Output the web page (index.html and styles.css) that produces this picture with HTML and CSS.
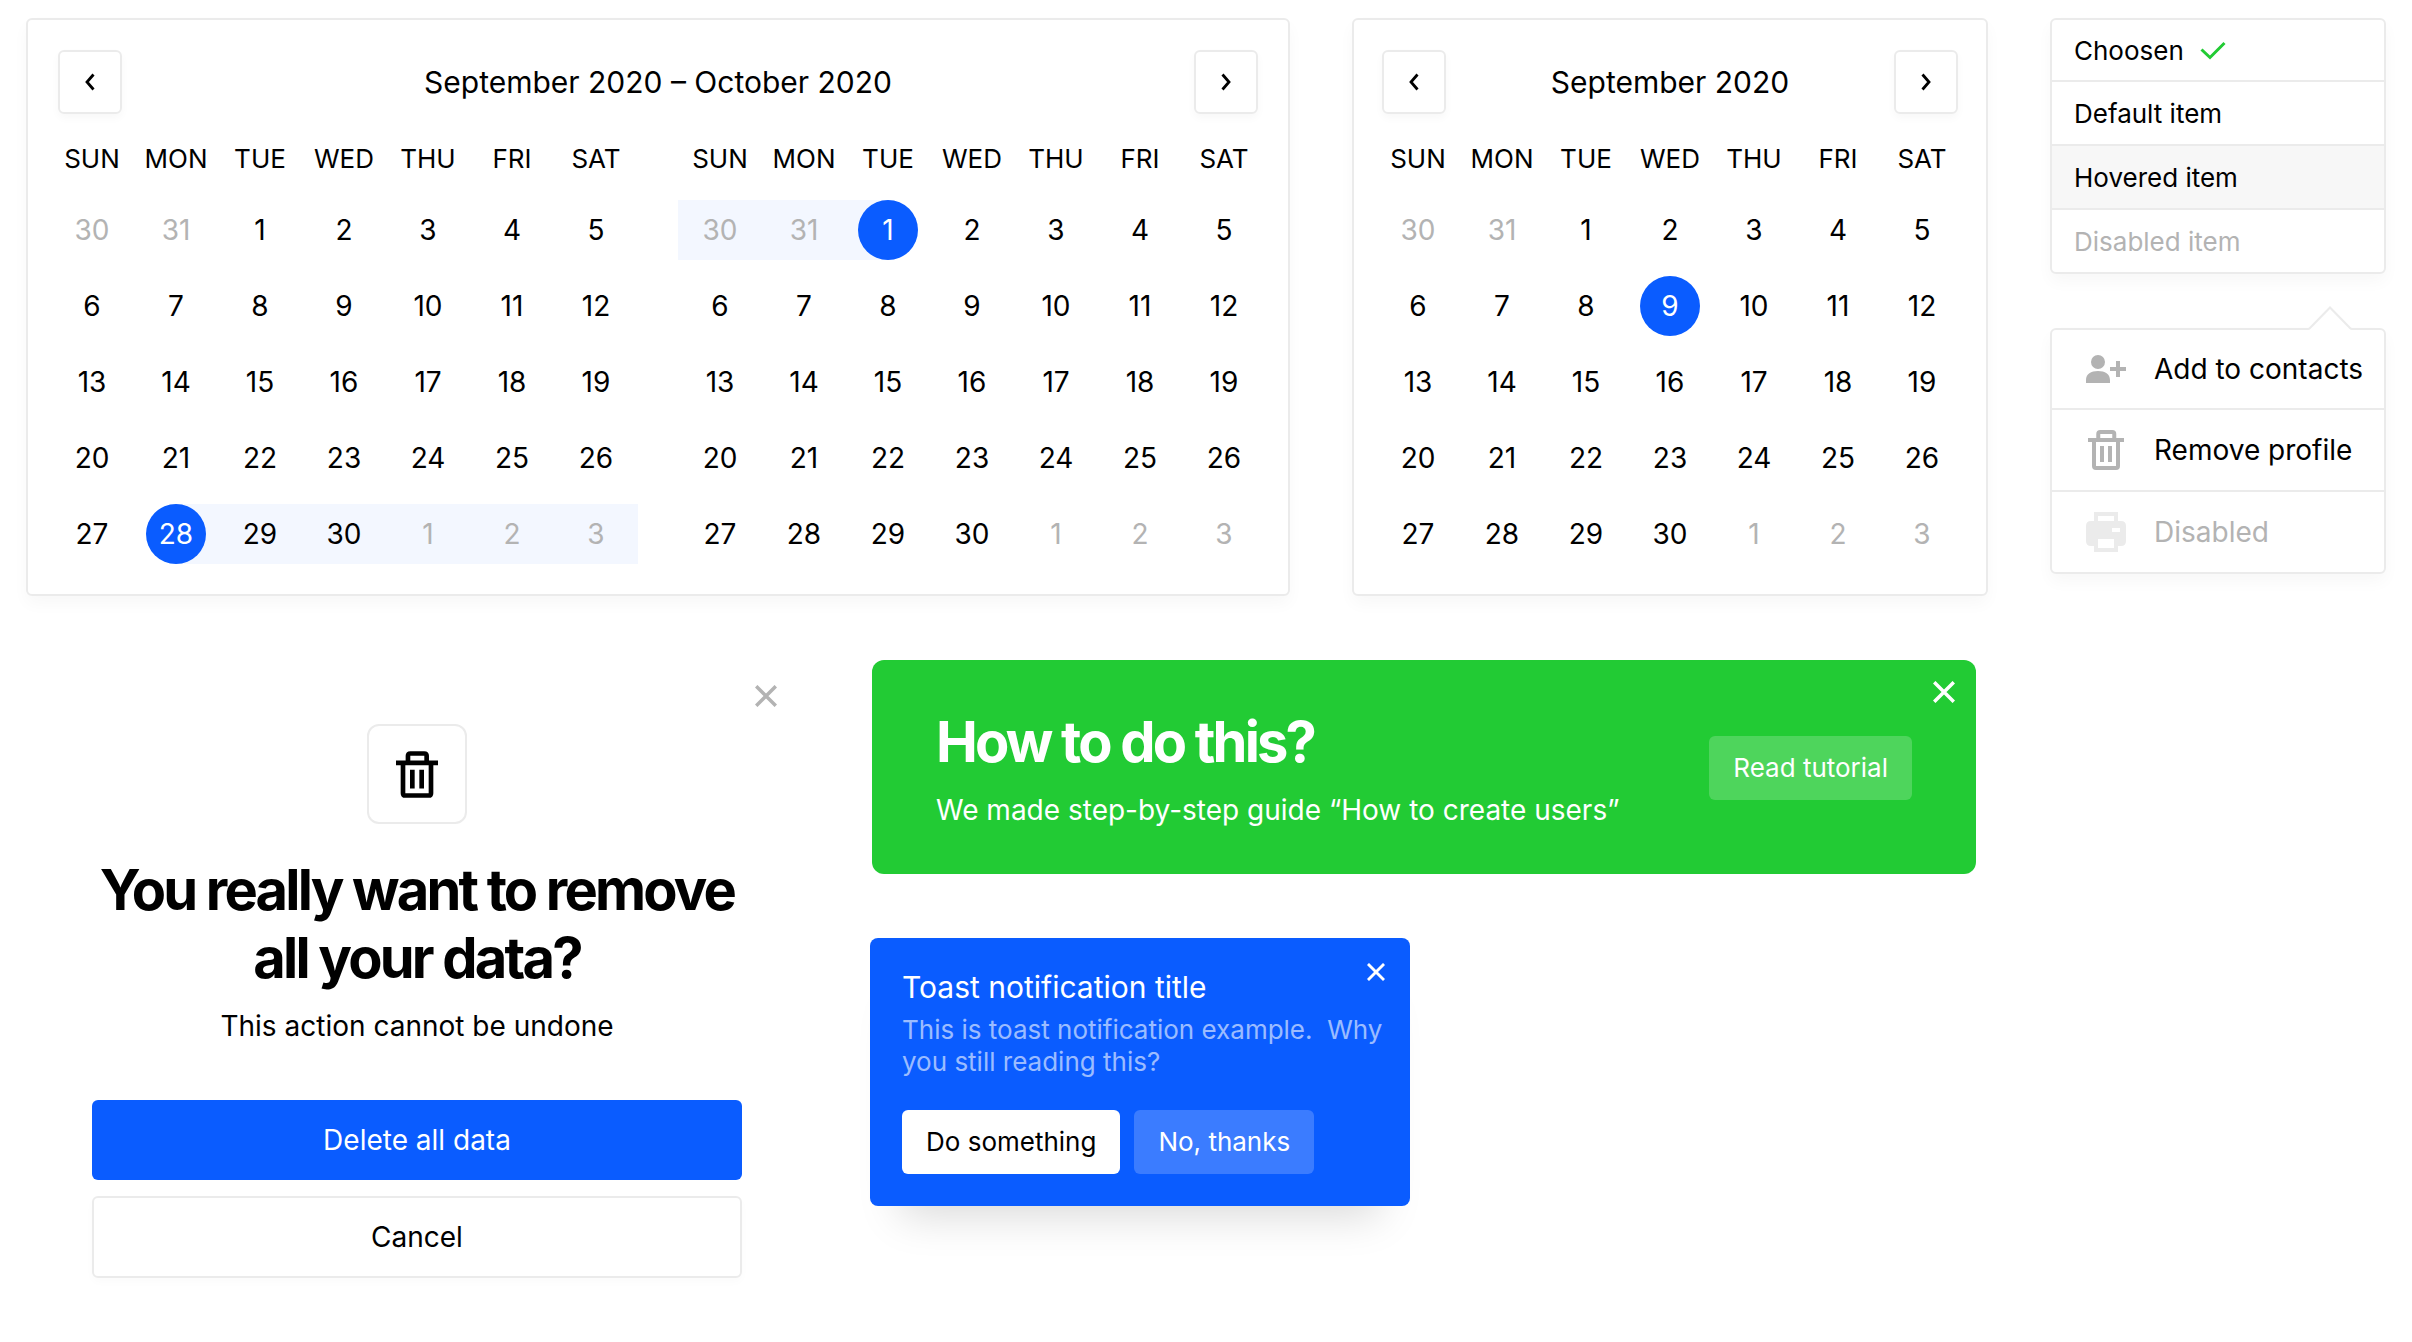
FILE: index.html
```html
<!DOCTYPE html>
<html lang="en">
<head>
<meta charset="utf-8">
<meta name="viewport" content="width=device-width, initial-scale=1">
<title>Calendars, menus and notifications</title>
<link rel="stylesheet" href="styles.css">
</head>
<body>
<svg class="sprite" aria-hidden="true">
  <symbol id="prev" viewBox="0 0 10 18"><path d="M8.500 1.500 2 9l6.500 7.500" fill="none" stroke="currentColor" stroke-width="2.800"/></symbol>
  <symbol id="next" viewBox="0 0 10 18"><path d="M1.500 1.500 8 9l-6.500 7.500" fill="none" stroke="currentColor" stroke-width="2.800"/></symbol>
  <symbol id="cross" viewBox="0 0 22 22"><path d="M1.200 1.200l19.600 19.600M20.800 1.200 1.200 20.800" fill="none" stroke="currentColor" stroke-width="3.500"/></symbol>
  <symbol id="trash" viewBox="0 0 27 30"><path d="M0 6h27v3H0zM9 12h3v12H9zM15 12h3v12h-3z" fill="currentColor"/><path d="M7.700 7.500v-4.500q0-1.500 1.500-1.500h9q1.500 0 1.500 1.500v4.500M4.500 7.500v19.500q0 1.500 1.500 1.500h15q1.500 0 1.500-1.500V7.500" fill="none" stroke="currentColor" stroke-width="3"/></symbol>
</svg>

<main class="board">
  <section class="card calendar calendar-double" aria-label="Date range">
    <header class="calendar-head">
      <button class="nav" type="button" aria-label="Previous month"><svg><use href="#prev"/></svg></button>
      <h2>September 2020 – October 2020</h2>
      <button class="nav" type="button" aria-label="Next month"><svg><use href="#next"/></svg></button>
    </header>
    <div class="months">
      <table>
        <thead><tr><th>SUN</th><th>MON</th><th>TUE</th><th>WED</th><th>THU</th><th>FRI</th><th>SAT</th></tr></thead>
        <tbody>
          <tr><td class="muted"><button>30</button></td><td class="muted"><button>31</button></td><td><button>1</button></td><td><button>2</button></td><td><button>3</button></td><td><button>4</button></td><td><button>5</button></td></tr>
          <tr><td><button>6</button></td><td><button>7</button></td><td><button>8</button></td><td><button>9</button></td><td><button>10</button></td><td><button>11</button></td><td><button>12</button></td></tr>
          <tr><td><button>13</button></td><td><button>14</button></td><td><button>15</button></td><td><button>16</button></td><td><button>17</button></td><td><button>18</button></td><td><button>19</button></td></tr>
          <tr><td><button>20</button></td><td><button>21</button></td><td><button>22</button></td><td><button>23</button></td><td><button>24</button></td><td><button>25</button></td><td><button>26</button></td></tr>
          <tr><td><button>27</button></td><td class="selected range-start"><button>28</button></td><td class="range"><button>29</button></td><td class="range"><button>30</button></td><td class="range muted"><button>1</button></td><td class="range muted"><button>2</button></td><td class="range muted"><button>3</button></td></tr>
        </tbody>
      </table>
      <table>
        <thead><tr><th>SUN</th><th>MON</th><th>TUE</th><th>WED</th><th>THU</th><th>FRI</th><th>SAT</th></tr></thead>
        <tbody>
          <tr><td class="range muted"><button>30</button></td><td class="range muted"><button>31</button></td><td class="selected range-end"><button>1</button></td><td><button>2</button></td><td><button>3</button></td><td><button>4</button></td><td><button>5</button></td></tr>
          <tr><td><button>6</button></td><td><button>7</button></td><td><button>8</button></td><td><button>9</button></td><td><button>10</button></td><td><button>11</button></td><td><button>12</button></td></tr>
          <tr><td><button>13</button></td><td><button>14</button></td><td><button>15</button></td><td><button>16</button></td><td><button>17</button></td><td><button>18</button></td><td><button>19</button></td></tr>
          <tr><td><button>20</button></td><td><button>21</button></td><td><button>22</button></td><td><button>23</button></td><td><button>24</button></td><td><button>25</button></td><td><button>26</button></td></tr>
          <tr><td><button>27</button></td><td><button>28</button></td><td><button>29</button></td><td><button>30</button></td><td class="muted"><button>1</button></td><td class="muted"><button>2</button></td><td class="muted"><button>3</button></td></tr>
        </tbody>
      </table>
    </div>
  </section>

  <section class="card calendar calendar-single" aria-label="Date">
    <header class="calendar-head">
      <button class="nav" type="button" aria-label="Previous month"><svg><use href="#prev"/></svg></button>
      <h2>September 2020</h2>
      <button class="nav" type="button" aria-label="Next month"><svg><use href="#next"/></svg></button>
    </header>
    <div class="months">
      <table>
        <thead><tr><th>SUN</th><th>MON</th><th>TUE</th><th>WED</th><th>THU</th><th>FRI</th><th>SAT</th></tr></thead>
        <tbody>
          <tr><td class="muted"><button>30</button></td><td class="muted"><button>31</button></td><td><button>1</button></td><td><button>2</button></td><td><button>3</button></td><td><button>4</button></td><td><button>5</button></td></tr>
          <tr><td><button>6</button></td><td><button>7</button></td><td><button>8</button></td><td class="selected"><button>9</button></td><td><button>10</button></td><td><button>11</button></td><td><button>12</button></td></tr>
          <tr><td><button>13</button></td><td><button>14</button></td><td><button>15</button></td><td><button>16</button></td><td><button>17</button></td><td><button>18</button></td><td><button>19</button></td></tr>
          <tr><td><button>20</button></td><td><button>21</button></td><td><button>22</button></td><td><button>23</button></td><td><button>24</button></td><td><button>25</button></td><td><button>26</button></td></tr>
          <tr><td><button>27</button></td><td><button>28</button></td><td><button>29</button></td><td><button>30</button></td><td class="muted"><button>1</button></td><td class="muted"><button>2</button></td><td class="muted"><button>3</button></td></tr>
        </tbody>
      </table>
    </div>
  </section>

  <aside class="menus">
    <div class="card options">
      <button type="button">Choosen <svg class="check" viewBox="0 0 26 20"><path d="M1.500 8.500 10 16.500 24.500 2" fill="none" stroke="currentColor" stroke-width="3"/></svg></button>
      <button type="button">Default item</button>
      <button type="button" class="hovered">Hovered item</button>
      <button type="button" disabled>Disabled item</button>
    </div>
    <div class="card actions">
      <svg class="pointer" viewBox="0 0 44 24" aria-hidden="true"><path d="M0 24v-1q1 0 2-1L22 1.500 42 22q1 1 2 1v1z" fill="#fff"/><path d="M0 23q1 0 2-1L22 1.500 42 22q1 1 2 1" fill="none" stroke="#ebebeb" stroke-width="2"/></svg>
      <button type="button">
        <svg class="icon-user" viewBox="0 0 40 28"><path d="M12 0a7 7 0 1 1 0 14a7 7 0 1 1 0-14zM0 28v-3C0 19 5 16 12 16s12 3 12 9v3zM30 6h4v6h6v4h-6v6h-4v-6h-6v-4h6z" fill="currentColor"/></svg>
        <span>Add to contacts</span>
      </button>
      <button type="button">
        <svg class="icon-trash"><use href="#trash"/></svg>
        <span>Remove profile</span>
      </button>
      <button type="button" disabled>
        <svg class="icon-print" viewBox="0 0 40 40"><path fill-rule="evenodd" d="M8 0h24v9h3q5 0 5 5v15q0 5-5 5h-3v6H8v-6H5q-5 0-5-5V14q0-5 5-5h3zM12 4v5h16V4zM26 16v4h8v-4zM12 27v9h16v-9z" fill="currentColor"/></svg>
        <span>Disabled</span>
      </button>
    </div>
  </aside>

  <section class="dialog" role="dialog" aria-labelledby="dialog-title">
    <button class="close close-muted" type="button" aria-label="Close"><svg><use href="#cross"/></svg></button>
    <div class="badge"><svg><use href="#trash"/></svg></div>
    <h1 id="dialog-title">You really want to remove<br>all your data?</h1>
    <p>This action cannot be undone</p>
    <div class="dialog-actions">
      <button class="primary" type="button">Delete all data</button>
      <button class="secondary" type="button">Cancel</button>
    </div>
  </section>

  <div class="notices">
    <section class="banner">
      <button class="close" type="button" aria-label="Close"><svg><use href="#cross"/></svg></button>
      <div>
        <h1>How to do this?</h1>
        <p>We made step-by-step guide “How to create users”</p>
      </div>
      <button class="small translucent" type="button">Read tutorial</button>
    </section>
    <section class="toast" role="status">
      <button class="close close-small" type="button" aria-label="Close"><svg><use href="#cross"/></svg></button>
      <h2>Toast notification title</h2>
      <p>This is toast notification example.&nbsp; Why<br>you still reading this?</p>
      <div class="toast-actions">
        <button class="small solid" type="button">Do something</button>
        <button class="small translucent" type="button">No, thanks</button>
      </div>
    </section>
  </div>
</main>
</body>
</html>
```
FILE: styles.css
```css
:root {
  --blue: #0a5cff;
  --green: #22cb34;
  --line: #ebebeb;
  --muted: #b3b3b3;
  --range: #f3f7ff;
}

* { box-sizing: border-box; }

body {
  margin: 0;
  background: #fff;
  color: #000;
  font-family: Inter, "Liberation Sans", sans-serif;
  font-size: 28px;
  line-height: 36px;
}

h1, h2, p { margin: 0; }
h1 { font-size: 56px; line-height: 68px; font-weight: 700; letter-spacing: -0.05em; }
h2 { font-size: 30px; line-height: 38px; font-weight: 400; }

button {
  margin: 0;
  padding: 0;
  border: 0;
  background: none;
  color: inherit;
  font: inherit;
  cursor: pointer;
}
button:disabled { cursor: default; }
svg { display: block; flex: none; }
.sprite { position: absolute; width: 0; height: 0; }

.board {
  display: grid;
  grid-template-columns: 782fr 420fr 636fr 336fr;
  column-gap: 62px;
  row-gap: 64px;
  align-items: start;
  padding: 18px 26px 64px;
}

.card {
  border: 2px solid var(--line);
  border-radius: 6px;
  background: #fff;
  box-shadow: 0 8px 16px rgba(0, 0, 0, 0.03);
}

/* Calendars */
.calendar { padding: 30px 22px 14px; }
.calendar-double { grid-column: span 2; }
.calendar-head {
  display: flex;
  align-items: center;
  justify-content: space-between;
  margin: 0 8px 4px;
}
.calendar-single .calendar-head { margin: 0 6px 4px; }
.nav {
  display: grid;
  place-items: center;
  width: 64px;
  height: 64px;
  border: 2px solid var(--line);
  border-radius: 6px;
  box-shadow: 0 4px 8px rgba(0, 0, 0, 0.03);
}
.nav svg { width: 10px; height: 18px; }
.months { display: flex; gap: 40px; }
table {
  flex: 1;
  table-layout: fixed;
  width: 100%;
  border-collapse: separate;
  border-spacing: 0 16px;
}
th { height: 50px; padding: 0; font-size: 26px; font-weight: 400; }
td { height: 60px; padding: 0; text-align: center; }
td button { width: 60px; height: 60px; border-radius: 50%; }
.muted { color: var(--muted); }
.range { background: var(--range); }
.range-start { background: linear-gradient(to right, #fff 50%, var(--range) 50%); }
.range-end { background: linear-gradient(to left, #fff 50%, var(--range) 50%); }
.selected button { background: var(--blue); color: #fff; }

/* Menus */
.menus { display: grid; gap: 54px; }
.options button, .actions button {
  display: flex;
  align-items: center;
  width: 100%;
  border-bottom: 2px solid var(--line);
  text-align: left;
}
.options button { gap: 16px; height: 64px; padding: 2px 22px 0; font-size: 26px; }
.options button:first-child { height: 62px; }
.options button:last-child, .actions button:last-child { border-bottom: 0; }
.options button:last-child { height: 62px; }
.options .hovered { background: #f7f7f7; }
.options button:disabled, .actions button:disabled { color: var(--muted); }
.check { width: 26px; height: 20px; color: var(--green); }

.actions { position: relative; }
.actions button { height: 82px; padding-left: 34px; }
.actions button:nth-of-type(1), .actions button:last-child { height: 80px; }
.actions span { margin-left: 28px; }
.actions button svg { color: var(--muted); }
.actions button:disabled svg { color: var(--line); }
.actions .icon-user { width: 40px; height: 28px; }
.actions .icon-trash { width: 40px; height: 40px; }
.actions .icon-print { width: 40px; height: 40px; }
.pointer { position: absolute; top: -24px; right: 32px; width: 44px; height: 24px; }

/* Close buttons sit over the corner of their panel */
.close {
  position: absolute;
  top: 14px;
  right: 14px;
  display: grid;
  place-items: center;
  width: 36px;
  height: 36px;
}
.close svg { width: 22px; height: 22px; }
.close-muted { top: 18px; right: 24px; color: var(--muted); }
.close-small { top: 16px; right: 16px; }
.close-small svg { width: 18px; height: 18px; }

/* Dialog */
.dialog { position: relative; padding: 64px 66px 0; text-align: center; }
.badge {
  display: grid;
  place-items: center;
  width: 100px;
  height: 100px;
  margin: 0 auto 32px;
  border: 2px solid var(--line);
  border-radius: 12px;
}
.badge svg { width: 42px; height: 47px; }
.dialog p { margin-top: 16px; }
.dialog-actions { display: grid; gap: 16px; margin-top: 56px; }
.primary { height: 80px; border-radius: 6px; background: var(--blue); color: #fff; }
.secondary {
  height: 82px;
  border: 2px solid var(--line);
  border-radius: 6px;
  box-shadow: 0 4px 8px rgba(0, 0, 0, 0.02);
}

/* Notifications */
.notices { grid-column: span 2; display: grid; justify-items: start; gap: 64px; }
.banner {
  position: relative;
  display: flex;
  align-items: center;
  justify-content: space-between;
  justify-self: stretch;
  margin: 0 12px 0 2px;
  padding: 48px 64px 46px;
  border-radius: 12px;
  background: var(--green);
  color: #fff;
}
.banner p { margin-top: 16px; }
.small { height: 64px; padding: 0 24px; border-radius: 6px; font-size: 26px; }
.translucent { background: rgba(255, 255, 255, 0.2); color: #fff; }
.solid { background: #fff; color: #000; }

.toast {
  position: relative;
  width: 540px;
  max-width: 100%;
  padding: 30px 24px 32px 32px;
  border-radius: 8px;
  background: var(--blue);
  color: #fff;
  box-shadow: 0 40px 40px -30px rgba(0, 0, 0, 0.15);
}
.toast p { margin-top: 8px; font-size: 26px; line-height: 32px; color: rgba(255, 255, 255, 0.6); }
.toast-actions { display: flex; gap: 14px; margin-top: 32px; }
```
